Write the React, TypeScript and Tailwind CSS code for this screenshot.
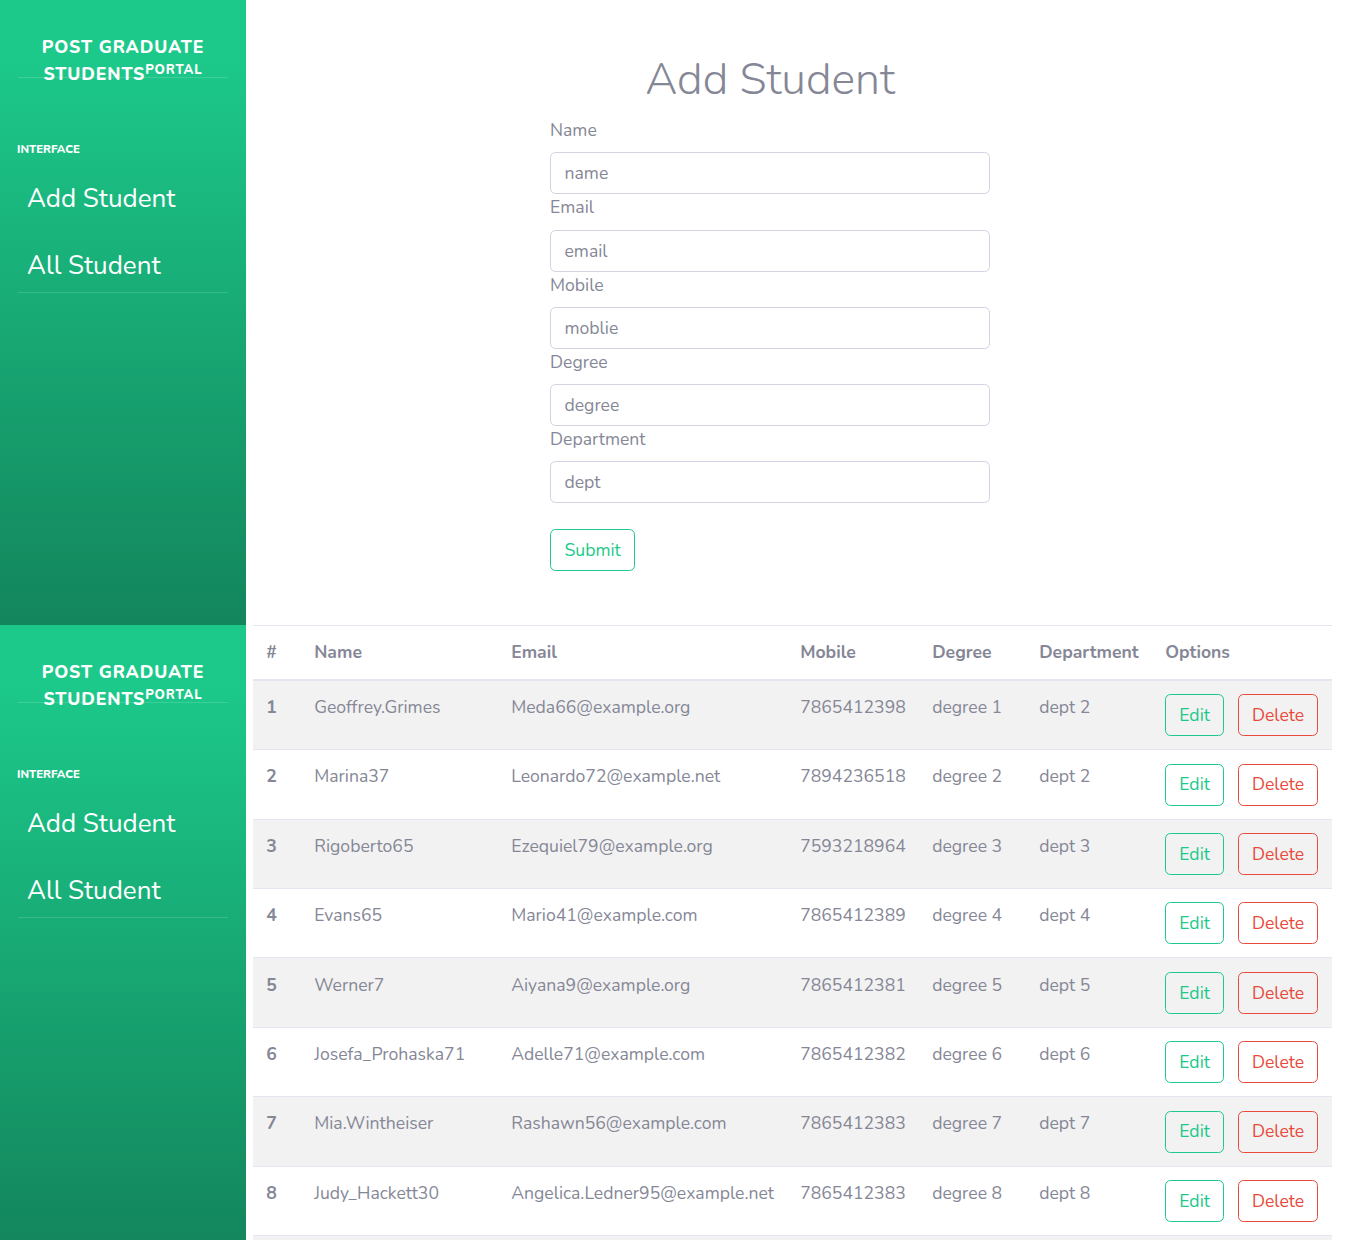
const STUDENTS = [
  { id: 1, name: 'Geoffrey.Grimes', email: 'Meda66@example.org', mobile: '7865412398', degree: 'degree 1', dept: 'dept 2' },
  { id: 2, name: 'Marina37', email: 'Leonardo72@example.net', mobile: '7894236518', degree: 'degree 2', dept: 'dept 2' },
  { id: 3, name: 'Rigoberto65', email: 'Ezequiel79@example.org', mobile: '7593218964', degree: 'degree 3', dept: 'dept 3' },
  { id: 4, name: 'Evans65', email: 'Mario41@example.com', mobile: '7865412389', degree: 'degree 4', dept: 'dept 4' },
  { id: 5, name: 'Werner7', email: 'Aiyana9@example.org', mobile: '7865412381', degree: 'degree 5', dept: 'dept 5' },
  { id: 6, name: 'Josefa_Prohaska71', email: 'Adelle71@example.com', mobile: '7865412382', degree: 'degree 6', dept: 'dept 6' },
  { id: 7, name: 'Mia.Wintheiser', email: 'Rashawn56@example.com', mobile: '7865412383', degree: 'degree 7', dept: 'dept 7' },
  { id: 8, name: 'Judy_Hackett30', email: 'Angelica.Ledner95@example.net', mobile: '7865412383', degree: 'degree 8', dept: 'dept 8' },
  { id: 9, name: 'Lonnie.Kub', email: 'Darian18@example.com', mobile: '7865412384', degree: 'degree 9', dept: 'dept 9' },
];

const FIELDS = [
  { label: 'Name', placeholder: 'name' },
  { label: 'Email', placeholder: 'email' },
  { label: 'Mobile', placeholder: 'moblie' },
  { label: 'Degree', placeholder: 'degree' },
  { label: 'Department', placeholder: 'dept' },
];

function Sidebar() {
  return (
    <aside className="w-[246px] h-[625px] shrink-0 self-start bg-[linear-gradient(180deg,#1cc88a_10%,#13855c_100%)] text-white">
      <div className="h-[77px] pt-[34px] text-center font-extrabold uppercase text-[17.6px] leading-[27px] tracking-[0.88px]">
        <div>Post Graduate</div>
        <div className="relative z-10">
          Students<sup className="text-[13px]">Portal</sup>
        </div>
      </div>
      <hr className="mx-[17.6px] border-t border-white/15" />
      <div className="px-[17px] pt-[63px] text-[11.4px] font-extrabold uppercase leading-[16px]">Interface</div>
      <nav className="flex flex-col gap-[35px] pt-[26px]">
        <a className="px-[27px] text-[26px] leading-[32px]">Add Student</a>
        <a className="px-[27px] text-[26px] leading-[32px]">All Student</a>
      </nav>
      <hr className="mx-[17.6px] mt-[10px] border-t border-white/15" />
    </aside>
  );
}

function AddStudentForm() {
  return (
    <main className="flex-1 pt-[54px]">
      <div className="ml-[304px] w-[440px]">
        <h1 className="text-center text-[44.5px] leading-[52.8px] font-light text-[#858796] mb-[10.4px]">Add Student</h1>
        {FIELDS.map((f) => (
          <div key={f.label}>
            <label className="block text-[17.6px] leading-[26.4px] text-[#858796] mb-[8.8px]">{f.label}</label>
            <input
              placeholder={f.placeholder}
              className="block w-full h-[42px] px-[13.5px] rounded-[5.5px] border border-[#d1d3e2] text-[17.6px] text-[#6e707e] placeholder:text-[#858796] outline-none"
            />
          </div>
        ))}
        <button className="mt-[26px] h-[42px] px-[13.5px] rounded-[5.5px] border border-[#1cc88a] text-[#1cc88a] text-[17.6px]">
          Submit
        </button>
      </div>
    </main>
  );
}

function StudentTable() {
  return (
    <main className="flex-1 pl-[7px]">
      <table className="w-[1079px] table-fixed border-collapse text-[17.6px] leading-[26.4px] text-[#858796]">
        <colgroup>
          <col className="w-[48px]" />
          <col className="w-[197px]" />
          <col className="w-[289px]" />
          <col className="w-[132px]" />
          <col className="w-[107px]" />
          <col className="w-[126px]" />
          <col className="w-[180px]" />
        </colgroup>
        <thead>
          <tr className="text-left">
            {['#', 'Name', 'Email', 'Mobile', 'Degree', 'Department', 'Options'].map((h) => (
              <th key={h} className="p-[13.2px] font-bold border-t border-b-2 border-[#e3e6f0] align-bottom">
                {h}
              </th>
            ))}
          </tr>
        </thead>
        <tbody>
          {STUDENTS.map((s, i) => (
            <tr key={s.id} className={i % 2 === 0 ? 'bg-[#f2f2f2]' : 'bg-white'}>
              <td className="p-[13.2px] border-t border-[#e3e6f0] align-top font-bold">{s.id}</td>
              <td className="p-[13.2px] border-t border-[#e3e6f0] align-top whitespace-nowrap">{s.name}</td>
              <td className="p-[13.2px] border-t border-[#e3e6f0] align-top whitespace-nowrap">{s.email}</td>
              <td className="p-[13.2px] border-t border-[#e3e6f0] align-top">{s.mobile}</td>
              <td className="p-[13.2px] border-t border-[#e3e6f0] align-top">{s.degree}</td>
              <td className="p-[13.2px] border-t border-[#e3e6f0] align-top">{s.dept}</td>
              <td className="p-[13.2px] pt-[13.5px] pb-[12.9px] border-t border-[#e3e6f0] align-top">
                <div className="flex gap-[14px]">
                  <button className="h-[42px] px-[13px] rounded-[5.5px] border border-[#1cc88a] text-[#1cc88a]">Edit</button>
                  <button className="h-[42px] px-[13px] rounded-[5.5px] border border-[#e74a3b] text-[#e74a3b]">Delete</button>
                </div>
              </td>
            </tr>
          ))}
        </tbody>
      </table>
    </main>
  );
}

export default function App() {
  return (
    <div className="w-[1366px] bg-white font-['Nunito','Lato',sans-serif]">
      <div className="flex h-[625px]">
        <Sidebar />
        <AddStudentForm />
      </div>
      <div className="flex">
        <Sidebar />
        <StudentTable />
      </div>
    </div>
  );
}
